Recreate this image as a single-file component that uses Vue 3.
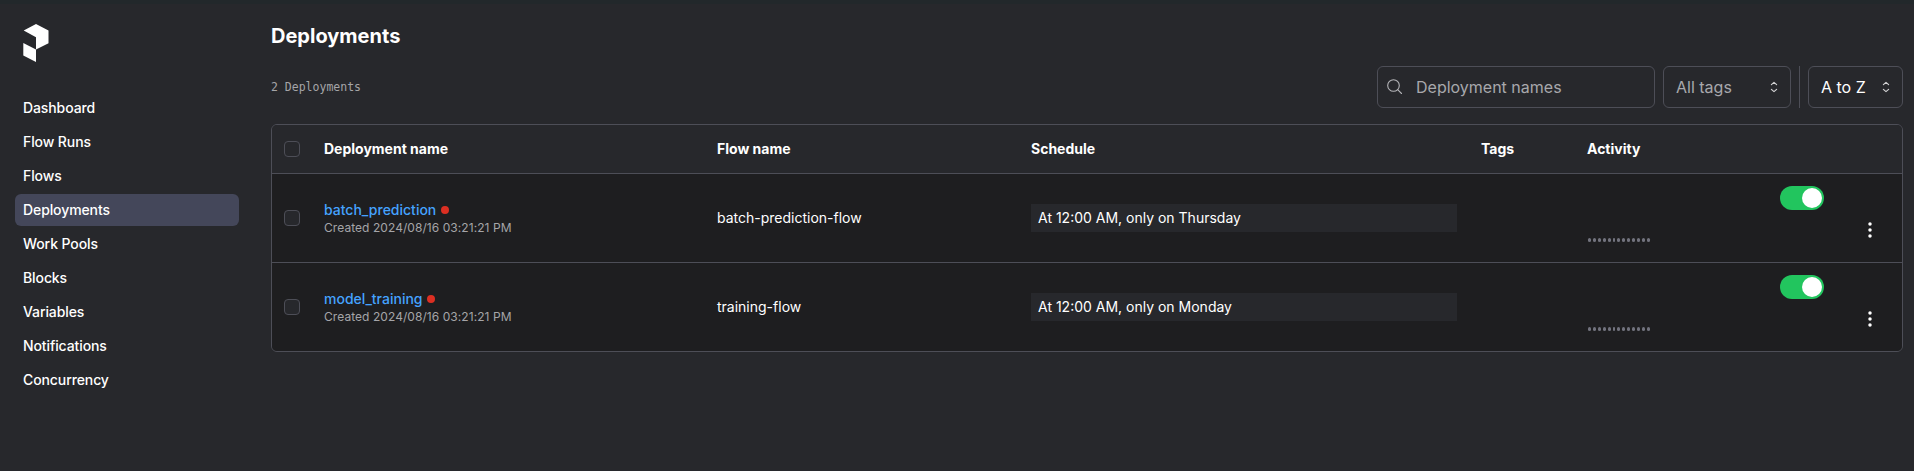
<script setup>
const nav = ['Dashboard', 'Flow Runs', 'Flows', 'Deployments', 'Work Pools', 'Blocks', 'Variables', 'Notifications', 'Concurrency']
const columns = ['Deployment name', 'Flow name', 'Schedule', 'Tags', 'Activity']
const rows = [
  { name: 'batch_prediction', flow: 'batch-prediction-flow', schedule: 'At 12:00 AM, only on Thursday' },
  { name: 'model_training', flow: 'training-flow', schedule: 'At 12:00 AM, only on Monday' },
]
const created = 'Created 2024/08/16 03:21:21 PM'
</script>

<template>
  <div class="app">
    <aside class="sidebar">
      <svg class="logo" width="26" height="39" viewBox="0 0 26 39" fill="#fff">
        <path d="M0.7 6.6 13 0l12.5 6.6v12.6L13 25.5V13.2z" />
        <path d="M0.3 19 13 25.5V38L0.3 31.6z" />
      </svg>
      <nav class="nav">
        <a v-for="item in nav" :key="item" class="nav-item" :class="{ active: item === 'Deployments' }">{{ item }}</a>
      </nav>
    </aside>

    <main class="main">
      <h1 class="title">Deployments</h1>
      <div class="toolbar">
        <span class="count">2 Deployments</span>
        <div class="control search">
          <svg width="16" height="16" viewBox="0 0 16 16" fill="none" stroke="#b4b4b8" stroke-width="1.1" stroke-linecap="round">
            <circle cx="6.5" cy="6.5" r="5.8" />
            <path d="M10.7 10.7l3.8 3.8" />
          </svg>
          <span>Deployment names</span>
        </div>
        <div class="control tags">
          <span>All tags</span>
          <svg width="8" height="12" viewBox="0 0 8 12" class="chevrons"><path d="M1.4 3.6 4 1.4l2.6 2.2M1.4 8.4 4 10.6l2.6-2.2" /></svg>
        </div>
        <div class="divider"></div>
        <div class="control sort">
          <span>A to Z</span>
          <svg width="8" height="12" viewBox="0 0 8 12" class="chevrons"><path d="M1.4 3.6 4 1.4l2.6 2.2M1.4 8.4 4 10.6l2.6-2.2" /></svg>
        </div>
      </div>

      <div class="table">
        <div class="row head">
          <span class="checkbox"></span>
          <span v-for="c in columns" :key="c">{{ c }}</span>
        </div>
        <div v-for="r in rows" :key="r.name" class="row">
          <span class="checkbox"></span>
          <div>
            <div class="name">{{ r.name }}<i class="status"></i></div>
            <div class="created">{{ created }}</div>
          </div>
          <span>{{ r.flow }}</span>
          <div class="schedule">{{ r.schedule }}</div>
          <span></span>
          <div class="activity">
            <i v-for="n in 13" :key="n" class="bar" :class="{ thin: n === 6 }"></i>
          </div>
          <div class="actions">
            <div class="toggle"><i class="knob"></i></div>
            <svg class="kebab" width="4" height="16" viewBox="0 0 4 16" fill="#fff">
              <circle cx="2" cy="2" r="1.75" /><circle cx="2" cy="8" r="1.75" /><circle cx="2" cy="14" r="1.75" />
            </svg>
          </div>
        </div>
      </div>
    </main>
  </div>
</template>

<style>
body {
  background: #27282c;
}
</style>

<style scoped>
.app {
  box-sizing: border-box;
  display: flex;
  height: 471px;
  border-top: 4px solid #22282b;
  background: #27282c;
  color: #fff;
  font: 400 14px/20px Inter, "Liberation Sans", sans-serif;
}
.sidebar {
  box-sizing: border-box;
  width: 256px;
  padding: 20px 17px 0 15px;
}
.logo {
  display: block;
  margin: 0 0 29px 8px;
}
.nav {
  display: flex;
  flex-direction: column;
  gap: 2px;
}
.nav-item {
  padding: 6px 8px;
  border-radius: 6px;
  font-weight: 500;
  letter-spacing: -0.1px;
}
.nav-item.active {
  background: #44475a;
}
.main {
  flex: 1;
  padding: 18px 11px 0 15px;
}
.title {
  margin: 0 0 16px;
  font-size: 20px;
  line-height: 28px;
  font-weight: 700;
}
.toolbar {
  display: flex;
  align-items: center;
  gap: 8px;
  height: 42px;
  margin-bottom: 16px;
}
.count {
  margin-right: auto;
  color: #a5a5a8;
  font: 11.5px/16px "DejaVu Sans Mono", monospace;
}
.control {
  box-sizing: border-box;
  display: flex;
  align-items: center;
  height: 42px;
  border: 1px solid #4d4e57;
  border-radius: 6px;
  font-size: 16px;
  color: #a8a8ac;
}
.search {
  width: 278px;
  padding-left: 9px;
  gap: 13px;
}
.tags {
  width: 128px;
  justify-content: space-between;
  padding: 0 12px;
}
.divider {
  width: 1px;
  height: 42px;
  background: #4d4e57;
}
.sort {
  width: 95px;
  justify-content: space-between;
  padding: 0 12px;
  color: #fff;
}
.chevrons {
  fill: none;
  stroke: #d2d2d4;
  stroke-width: 1.2;
  stroke-linecap: round;
  stroke-linejoin: round;
}
.table {
  border: 1px solid #4d4e57;
  border-radius: 6px;
  overflow: hidden;
}
.row {
  display: grid;
  grid-template-columns: 40px 393px 314px 450px 106px 193px 1fr;
  align-items: center;
  height: 88px;
  padding-left: 12px;
  background: #1e1e20;
}
.row + .row {
  border-top: 1px solid #4d4e57;
}
.row.head {
  height: 48px;
  background: #27282c;
  font-weight: 700;
}
.checkbox {
  box-sizing: border-box;
  width: 16px;
  height: 16px;
  border: 1px solid #4d4e57;
  border-radius: 4px;
  background: #27282c;
}
.name {
  display: flex;
  align-items: center;
  gap: 4.5px;
  color: #45a3ff;
  font-weight: 500;
}
.status {
  width: 8px;
  height: 8px;
  border-radius: 50%;
  background: #dc2f22;
}
.created {
  color: #a5a5a8;
  font-size: 12px;
  line-height: 16px;
  letter-spacing: 0.06px;
}
.schedule {
  width: 426px;
  box-sizing: border-box;
  padding: 4px 7px;
  background: #27282c;
}
.activity {
  display: flex;
  gap: 2px;
  padding: 44px 0 0 1px;
}
.bar {
  width: 3px;
  height: 4px;
  border-radius: 1.5px;
  background: #72737e;
}
.bar.thin {
  width: 2px;
}
.actions {
  display: flex;
  align-self: start;
  padding-top: 12px;
}
.toggle {
  box-sizing: border-box;
  display: flex;
  justify-content: flex-end;
  width: 44px;
  height: 24px;
  padding: 2px;
  border-radius: 12px;
  background: #22c55e;
}
.knob {
  width: 20px;
  height: 20px;
  border-radius: 50%;
  background: #fff;
}
.kebab {
  margin: 36px 0 0 44px;
}
</style>
